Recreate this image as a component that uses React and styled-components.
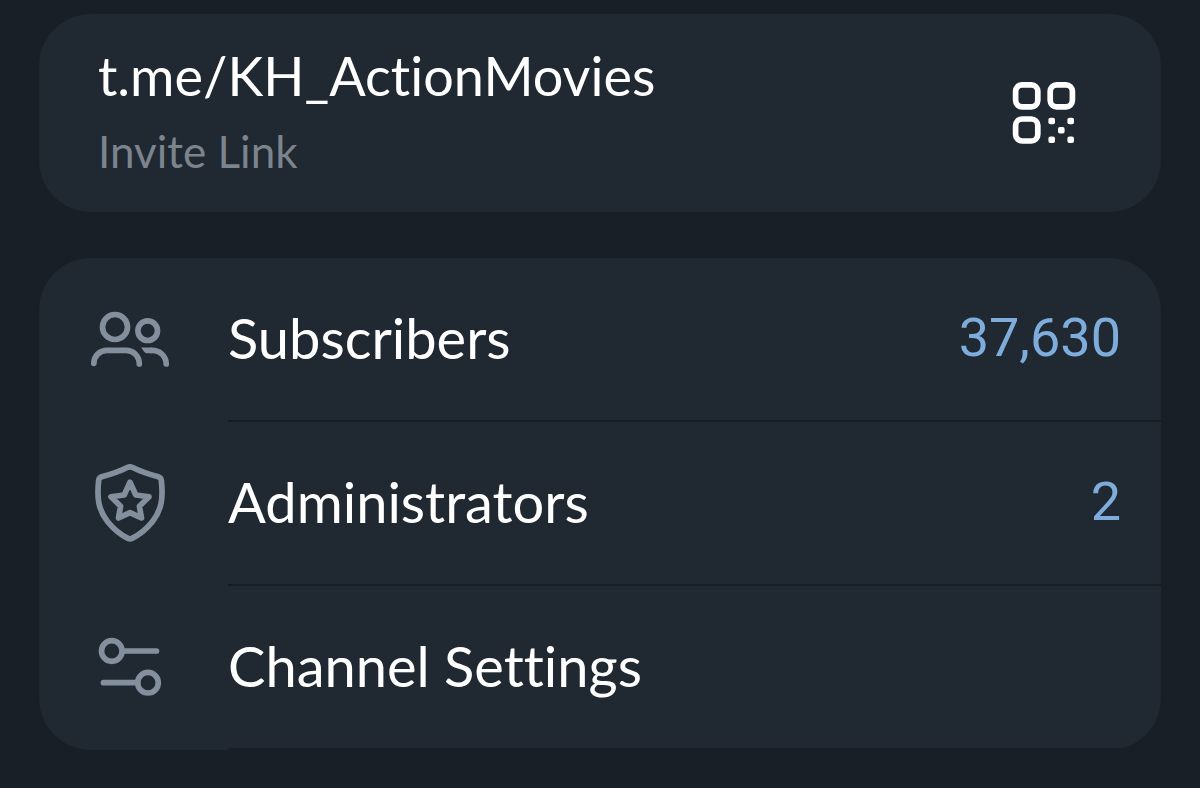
import React from "react"
import styled, { createGlobalStyle } from "styled-components"

const colors = {
  page: "#181f26",
  card: "#202832",
  line: "#171d25",
  text: "#ffffff",
  muted: "#7c848d",
  icon: "#848f9e",
  value: "#7eaddc",
}

const GlobalStyle = createGlobalStyle`
  * {
    box-sizing: border-box;
  }

  body {
    margin: 0;
    background-color: ${colors.page};
    color: ${colors.text};
    font-family: Lato, "Liberation Sans", sans-serif;
    font-variant-ligatures: none;
  }
`

const Page = styled.main`
  display: flex;
  flex-direction: column;
  gap: 46px;
  padding: 14px 39px 34px;
`

const Card = styled.section`
  background-color: ${colors.card};
  border-radius: 52px;
  overflow: hidden;
`

const LinkCard = styled(Card)`
  display: flex;
  align-items: center;
  justify-content: space-between;
  padding: 0 84px 0 59px;
`

const LinkText = styled.div`
  display: flex;
  flex-direction: column;
  gap: 8px;
  padding: 27px 0 29px;
`

const InviteLink = styled.a`
  color: ${colors.text};
  font-size: 54px;
  line-height: 70px;
  text-decoration: none;
`

const Caption = styled.span`
  color: ${colors.muted};
  font-size: 44px;
  line-height: 64px;
`

const IconButton = styled.button`
  display: flex;
  padding: 0;
  border: 0;
  background: none;
  color: ${colors.text};
  cursor: pointer;
`

const Row = styled.button`
  display: flex;
  align-items: center;
  gap: 58px;
  width: 100%;
  padding: 0 0 0 51px;
  border: 0;
  background: none;
  color: ${colors.icon};
  font-family: inherit;
  font-size: 56px;
  font-variant-ligatures: inherit;
  line-height: 70px;
  text-align: left;
  cursor: pointer;
`

const RowBody = styled.span`
  display: flex;
  flex: 1;
  align-items: center;
  justify-content: space-between;
  padding: 45px 40px 47px 0;
  border-bottom: 2px solid ${props => (props.$last ? colors.page : colors.line)};
  color: ${colors.text};
`

const Value = styled.span`
  color: ${colors.value};
  font-family: Roboto, "Liberation Sans", sans-serif;
  font-size: 54px;
`

const Icon = styled.svg`
  flex: none;
  width: ${props => props.$size}px;
  height: ${props => props.$size}px;
  fill: none;
  stroke: currentColor;
  stroke-width: 5.7;
  stroke-linecap: round;
  stroke-linejoin: round;
`

const QrIcon = () => (
  <Icon $size={66} viewBox="0 0 66 66" aria-hidden="true">
    <rect x="4.6" y="4.8" width="22.2" height="22" rx="6.5" />
    <rect x="39.2" y="4.8" width="22.2" height="22" rx="6.5" />
    <rect x="4.6" y="39" width="22.2" height="22" rx="6.5" />
    <g fill="currentColor" stroke="none">
      <rect x="37.4" y="37.7" width="6.6" height="6.6" rx="2" />
      <rect x="56.4" y="37.7" width="6.6" height="6.6" rx="2" />
      <rect x="47" y="47" width="6.6" height="6.6" rx="2" />
      <rect x="37.4" y="56.4" width="6.6" height="6.6" rx="2" />
      <rect x="56.4" y="56.4" width="6.6" height="6.6" rx="2" />
    </g>
  </Icon>
)

const PeopleIcon = () => (
  <Icon $size={80} viewBox="0 0 80 80" aria-hidden="true">
    <circle cx="25" cy="27" r="12.5" />
    <circle cx="57.7" cy="30.7" r="9.8" />
    <path d="M3.8 63.4C4 56 9.5 50.4 17 50.4H36C43.5 50.4 49.2 56 49.3 64" />
    <path d="M62 50.4C70 50.4 76 56 76.2 64" />
    <path
      d="M51 47.6H62V53.2H56.5C54.3 53.2 53.4 50.2 51 47.6Z"
      fill="currentColor"
      stroke="none"
    />
  </Icon>
)

const ShieldIcon = () => (
  <Icon $size={80} viewBox="0 1 80 80" aria-hidden="true">
    <path d="M37.8 4.3Q40 3.4 42.2 4.3C50 8.2 59 11.4 68.3 13.8Q71 14.6 71.3 17.4C73.2 34 72 46.5 62.5 58.5C56.5 66 49.5 71.7 42 75.4Q40 76.4 38 75.4C30.5 71.7 23.5 66 17.5 58.5C8 46.5 6.8 34 8.7 17.4Q9 14.6 11.7 13.8C21 11.4 30 8.2 37.8 4.3Z" />
    <path d="M40 19.3L45.8 32L59 33.8L49.4 43.2L51.5 55L40 49.6L28.5 55L30.6 43.2L21 33.8L34.2 32Z" />
  </Icon>
)

const SettingsIcon = () => (
  <Icon $size={80} viewBox="0 1 80 80" aria-hidden="true">
    <circle cx="21.8" cy="24" r="10.3" />
    <path d="M32.5 24H66.5" />
    <circle cx="58" cy="55.7" r="10.3" />
    <path d="M13.5 55.7H47.5" />
  </Icon>
)

const rows = [
  { label: "Subscribers", value: "37,630", RowIcon: PeopleIcon },
  { label: "Administrators", value: "2", RowIcon: ShieldIcon },
  { label: "Channel Settings", RowIcon: SettingsIcon },
]

const App = () => {
  return (
    <>
      <GlobalStyle />
      <Page>
        <LinkCard>
          <LinkText>
            <InviteLink href="https://t.me/KH_ActionMovies">
              t.me/KH_ActionMovies
            </InviteLink>
            <Caption>Invite Link</Caption>
          </LinkText>
          <IconButton type="button" aria-label="QR code">
            <QrIcon />
          </IconButton>
        </LinkCard>
        <Card>
          {rows.map(({ label, value, RowIcon }, index) => (
            <Row type="button" key={label}>
              <RowIcon />
              <RowBody $last={index === rows.length - 1}>
                <span>{label}</span>
                {value && <Value>{value}</Value>}
              </RowBody>
            </Row>
          ))}
        </Card>
      </Page>
    </>
  )
}

export default App
